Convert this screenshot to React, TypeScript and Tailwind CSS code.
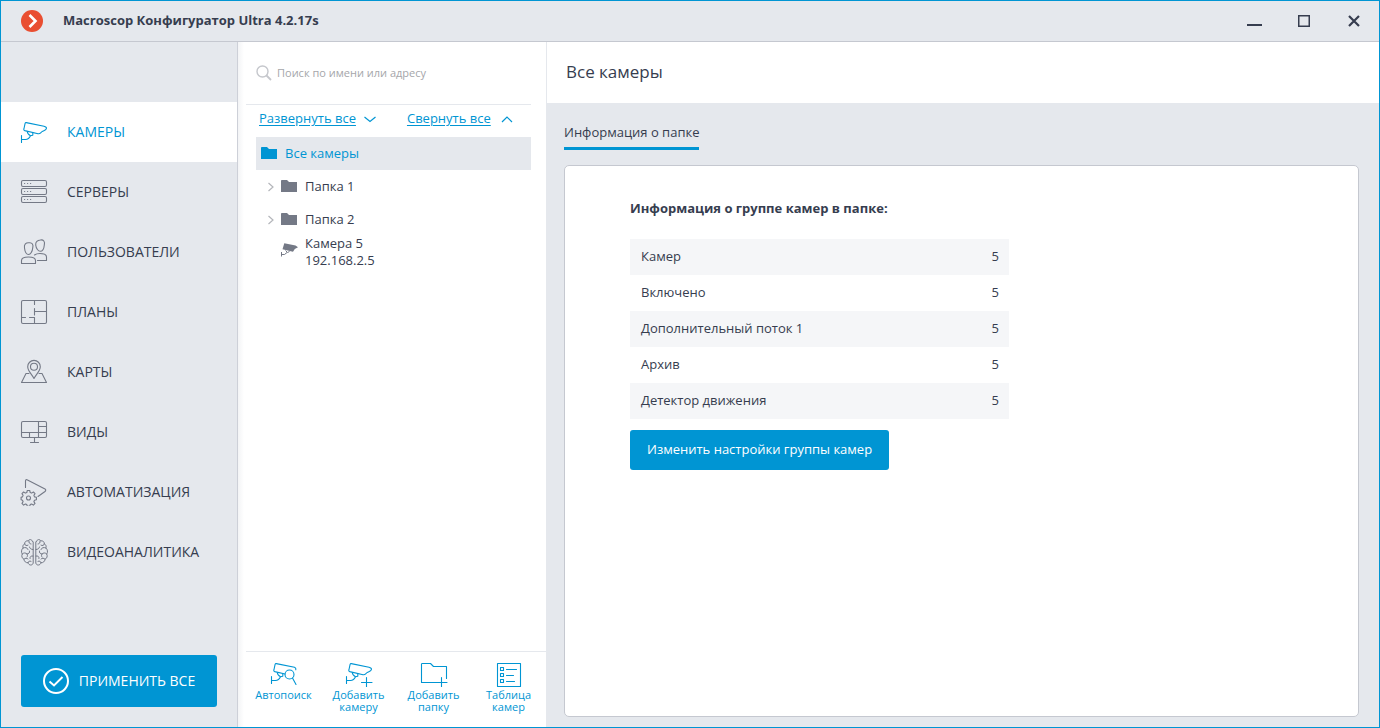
import type { ReactNode } from "react";

type IconProps = { children: ReactNode; size?: string };

function Icon({ children, size = "size-7" }: IconProps) {
  return (
    <svg
      aria-hidden="true"
      viewBox="0 0 28 28"
      className={`${size} shrink-0`}
      fill="none"
      stroke="currentColor"
      strokeWidth="1.1"
      strokeLinecap="round"
      strokeLinejoin="round"
    >
      {children}
    </svg>
  );
}

const cameraBody =
  "M6.3 4.6L24 8.2Q26.6 8.8 26.5 10.3C26.2 12.6 23.8 12.4 22 13.6C20.5 14.8 20 16.2 18 15.7L4.8 12.6Q3.5 12.2 3.9 11L5.1 5.3Q5.4 4.4 6.3 4.6Z";
const cameraArm = "M1.5 17.5V24.5M1.5 21.5H5.5C8 21.5 9.5 20 10.5 17.7M7.3 13.5C7.3 15.5 8 16.3 10.5 17.7L12.8 17.2V14.8";

const CameraIcon = () => (
  <Icon>
    <path d={cameraBody} />
    <path d={cameraArm} />
  </Icon>
);

const ServersIcon = () => (
  <Icon>
    {[2.5, 10.5, 18.5].map((y) => (
      <g key={y}>
        <rect x="1.5" y={y} width="25" height="6" rx="1.5" />
        <path d={`M4.5 ${y + 3}h.2M7.5 ${y + 3}h.2M10.5 ${y + 3}h.2`} />
      </g>
    ))}
  </Icon>
);

const UsersIcon = () => (
  <Icon>
    <path d="M1.5 25.5V22.5C1.5 20.5 4.5 19 8.5 19S15.5 20.5 15.5 22.5V25.5Z" />
    <path d="M4.5 10C3.8 6.5 6 4.5 9 4.8C12.3 4.2 13.6 7 12.7 10C12.4 13.5 10.6 16.5 8.6 16.5S4.9 13.5 4.5 10Z" />
    <path d="M15.7 7C15.4 4 17.5 2.2 20.3 2C23.5 1.3 25.2 3.8 24.3 7C24 10.5 22.3 13.3 20.3 13.3S16.1 10.5 15.7 7Z" />
    <path d="M14.5 17C16 15.8 18 15.5 20 15.5C24 15.5 26.5 17 26.5 19V22.5H17.5" />
  </Icon>
);

const PlansIcon = () => (
  <Icon>
    <rect x="1.5" y="2.5" width="25" height="23" rx="1.5" />
    <path d="M14.5 2.5V6.5M14.5 10.5V17M14.5 13.5H26.5M1.5 19.5H5.5M9.5 19.5H14.5V25.5" />
  </Icon>
);

const MapsIcon = () => (
  <Icon>
    <path d="M14 20.5C12 16.5 7.7 13 7.7 8.7A6.3 6.3 0 0 1 20.3 8.7C20.3 13 16 16.5 14 20.5Z" />
    <circle cx="14" cy="8.7" r="3.5" />
    <path d="M9 15.5H6L1.5 24.5H26.5L22 15.5H19" />
  </Icon>
);

const ViewsIcon = () => (
  <Icon>
    <rect x="1.5" y="3.5" width="25" height="16" rx="1.5" />
    <path d="M18.5 3.5V19.5M18.5 8.5H26.5M1.5 14.5H26.5M9.5 14.5V19.5M14.5 19.5V24.5M10.5 24.5H18.5" />
  </Icon>
);

const AutomationIcon = () => (
  <Icon>
    <path d="M5.5 9.5V3Q5.5 1 7.5 1.9L25 10.9Q26.5 12 25 13.5L18 18.5" />
    <path d="M7.3 12.5h2.4l.5 2 1.4.6 1.8-1.1 1.6 1.7-1.1 1.7.6 1.5 1.9.4v2.4l-1.9.5-.6 1.5 1.1 1.7-1.6 1.7-1.8-1.1-1.4.6-.5 1.7H7.3l-.5-1.7-1.4-.6-1.8 1.1L2 25.4l1.1-1.7-.6-1.5-1.4-.5v-2.4l1.4-.4.6-1.5L2 15.7 3.6 14l1.8 1.1 1.4-.6Z" />
    <circle cx="8.5" cy="20" r="2" />
  </Icon>
);

const BrainHalf = () => (
  <path d="M12.5 3.5C12 1 9 1 8.3 2.8C6 2.5 4.5 4 4.7 6C3 6.5 2.4 8.5 3.2 10C1.3 11.2 1 14.5 2.3 16C1.2 18 2 20.5 4 21.2C4.2 23.5 6 25 8 24.7C8.7 27.5 12.5 28 13.2 25V4M9 3C8.5 4.5 9.5 6 11 6M4.7 6C5 7.5 6.5 8 8 7.2M3.2 10C5 9 7.5 9.5 8 11.5M13 11.5C11 11.5 9.8 10.5 9.5 9M2.3 16C3.5 14.5 6 14.5 7 16M7 16C9 16 10 14.5 9.5 13M7 16C7.8 17 7.7 18.2 7 19M4 21.2C5 19.7 7 20 8 21M13 18C11 17.5 9.5 19 10 20.5M8 24.7C8 23.5 9.5 22.5 11 23.3" />
);

const BrainIcon = () => (
  <Icon>
    <g strokeWidth="1">
      <BrainHalf />
      <g transform="translate(29 0) scale(-1 1)">
        <BrainHalf />
      </g>
    </g>
  </Icon>
);

const SearchCameraIcon = () => (
  <Icon>
    <path d="M15 15L4.8 12.6Q3.5 12.2 3.9 11L5.1 5.3Q5.4 4.4 6.3 4.6L24.5 8.3Q26.3 9 25.8 10.8" />
    <path d={cameraArm} />
    <circle cx="19.5" cy="15.5" r="4.5" />
    <path d="M22.5 19L26 25.5" />
  </Icon>
);

const AddCameraIcon = () => (
  <Icon>
    <path d={cameraBody} />
    <path d={cameraArm} />
    <path d="M21.5 18.5V28M16.5 23.5H27" />
  </Icon>
);

const AddFolderIcon = () => (
  <Icon>
    <path d="M17.5 23.5H1.5V5Q1.5 4.5 2.5 4.5H10.5L13.5 7.5H26.5V19.5" />
    <path d="M21.5 18.5V28M17.5 23.5H27" />
  </Icon>
);

const CameraTableIcon = () => (
  <Icon>
    <rect x="2.5" y="4.5" width="23" height="23" />
    <path d="M5.5 8.5h3v3h-3zM5.5 14.5h3v3h-3zM5.5 20.5h3v3h-3zM11.5 10.5H21.5M11.5 16.5H18.5M11.5 22.5H19.5" />
  </Icon>
);

const FolderIcon = () => (
  <svg aria-hidden="true" viewBox="0 0 16 13" className="h-[13px] w-4 shrink-0" fill="currentColor">
    <path d="M0 .5Q0 0 1 0H6L8 2H16V12H0Z" />
  </svg>
);

const SmallCameraIcon = () => (
  <svg aria-hidden="true" viewBox="0 0 17 14" className="h-[14px] w-[17px] shrink-0">
    <path d="M3.3.3L14.5 2.6L17 4.2L13.8 6L12 8.7L1.5 6.2Z" fill="currentColor" />
    <path d="M.5 9V13.5M.5 11.5H3.5L6 9.5M4.5 7.5L6.5 9.5L8.5 8.5" fill="none" stroke="currentColor" />
  </svg>
);

function Chevron({ d, className = "" }: { d: string; className?: string }) {
  return (
    <svg
      aria-hidden="true"
      viewBox="0 0 12 12"
      className={`size-3 shrink-0 ${className}`}
      fill="none"
      stroke="currentColor"
      strokeWidth="1.2"
    >
      <path d={d} />
    </svg>
  );
}

const sections = [
  { title: "КАМЕРЫ", icon: <CameraIcon />, active: true },
  { title: "СЕРВЕРЫ", icon: <ServersIcon /> },
  { title: "ПОЛЬЗОВАТЕЛИ", icon: <UsersIcon /> },
  { title: "ПЛАНЫ", icon: <PlansIcon /> },
  { title: "КАРТЫ", icon: <MapsIcon /> },
  { title: "ВИДЫ", icon: <ViewsIcon /> },
  { title: "АВТОМАТИЗАЦИЯ", icon: <AutomationIcon /> },
  { title: "ВИДЕОАНАЛИТИКА", icon: <BrainIcon /> },
];

const tools = [
  { title: "Автопоиск", icon: <SearchCameraIcon /> },
  { title: "Добавить камеру", icon: <AddCameraIcon /> },
  { title: "Добавить папку", icon: <AddFolderIcon /> },
  { title: "Таблица камер", icon: <CameraTableIcon /> },
];

const stats: [string, number][] = [
  ["Камер", 5],
  ["Включено", 5],
  ["Дополнительный поток 1", 5],
  ["Архив", 5],
  ["Детектор движения", 5],
];

function TitleBar() {
  return (
    <header className="flex h-[41px] shrink-0 items-center border-b border-[#c5c8d0] pr-[15px] pl-5">
      <svg aria-hidden="true" viewBox="0 0 22 22" className="size-[22px]">
        <circle cx="11" cy="11" r="11" fill="#e94e31" />
        <path d="M8.5 5L14.5 11L8.5 17" fill="none" stroke="#fff" strokeWidth="2.6" />
      </svg>
      <h1 className="ml-5 flex-1 text-[13px] font-bold">Macroscop Конфигуратор Ultra 4.2.17s</h1>
      <div className="flex items-center gap-[30px]">
        <button type="button" aria-label="Свернуть окно" className="size-5">
          <svg viewBox="0 0 20 20" className="size-5">
            <path d="M3 14H18" stroke="#363d4f" strokeWidth="2" />
          </svg>
        </button>
        <button type="button" aria-label="Развернуть окно" className="size-5">
          <svg viewBox="0 0 20 20" className="size-5">
            <rect x="4.75" y="4.75" width="10.5" height="10.5" fill="none" stroke="#363d4f" strokeWidth="1.5" />
          </svg>
        </button>
        <button type="button" aria-label="Закрыть" className="size-5">
          <svg viewBox="0 0 20 20" className="size-5">
            <path d="M5 5L15 15M15 5L5 15" stroke="#363d4f" strokeWidth="2.2" />
          </svg>
        </button>
      </div>
    </header>
  );
}

function Sidebar() {
  return (
    <aside className="flex w-[237px] shrink-0 flex-col border-r border-[#cdd0d8]">
      <nav className="flex-1 pt-[60px]">
        {sections.map((s) => (
          <a
            key={s.title}
            href="#"
            className={`flex h-[60px] items-center gap-[19px] pl-[19px] text-[14px] ${s.active ? "bg-white text-[#0095d3]" : ""}`}
          >
            <span className={s.active ? "" : "text-[#747986]"}>{s.icon}</span>
            <span className="pb-[2px]">{s.title}</span>
          </a>
        ))}
      </nav>
      <button
        type="button"
        className="mx-5 mb-5 flex h-[52px] items-center justify-center gap-[10px] rounded-[3px] bg-[#0095d3] text-[14px] text-white"
      >
        <svg aria-hidden="true" viewBox="0 0 26 26" className="size-[26px]" fill="none" stroke="currentColor" strokeWidth="2">
          <circle cx="13" cy="13" r="12" />
          <path d="M6.5 13.5L11 17.5L19.5 9" />
        </svg>
        <span className="pb-[2px]">ПРИМЕНИТЬ ВСЕ</span>
      </button>
    </aside>
  );
}

function CameraTree() {
  return (
    <section className="flex w-[309px] shrink-0 flex-col border-r border-[#e5e8ed] bg-white bg-linear-to-r from-[#f3f4f6] to-white to-[6px] pl-2">
      <div className="mr-[15px] border-b border-[#e5e8ed]">
        <label className="flex h-[62px] items-center gap-[5px] pl-[10px]">
          <svg aria-hidden="true" viewBox="0 0 16 16" className="size-4" fill="none" stroke="#c5c7cc">
            <circle cx="6.5" cy="6.5" r="5.5" strokeWidth="1.4" />
            <path d="M10.5 10.5L15 15" strokeWidth="1.8" />
          </svg>
          <input
            type="search"
            aria-label="Поиск"
            placeholder="Поиск по имени или адресу"
            className="min-w-0 flex-1 text-[11px] outline-none placeholder:text-[#a5a6aa]"
          />
        </label>
      </div>
      <div className="mr-[15px] flex h-8 items-center pb-1 pl-[13px] text-[13px] text-[#0095d3]">
        <button type="button" className="flex items-center gap-2 underline underline-offset-2">
          Развернуть все
          <Chevron d="M.5 4L6 8.5L11.5 4" />
        </button>
        <button type="button" className="ml-[31px] flex items-center gap-[10px] underline underline-offset-2">
          Свернуть все
          <Chevron d="M1 9L6 4L11 9" />
        </button>
      </div>
      <ul className="mr-[15px] ml-[10px] flex-1 text-[13px]">
        <li className="flex h-[33px] items-center gap-2 bg-[#e5e8ed] pl-[5px] text-[#0095d3]">
          <FolderIcon />
          Все камеры
        </li>
        {["Папка 1", "Папка 2"].map((name) => (
          <li key={name} className="flex h-[33px] items-center gap-2 pl-[9px]">
            <Chevron d="M3.5 2L8 6L3.5 10" className="-mr-1 text-[#b4b6bb]" />
            <span className="text-[#747986]">
              <FolderIcon />
            </span>
            {name}
          </li>
        ))}
        <li className="-mt-px flex items-center gap-[7px] pl-[25px] leading-[17px]">
          <span className="mb-1 text-[#747986]">
            <SmallCameraIcon />
          </span>
          <span>
            Камера 5<br />
            192.168.2.5
          </span>
        </li>
      </ul>
      <div className="grid h-[76px] grid-cols-4 border-t border-[#e5e8ed] text-[11px] leading-3 text-[#0095d3]">
        {tools.map((t) => (
          <button key={t.title} type="button" className="flex flex-col items-center gap-[2px] px-2 pt-[7px]">
            {t.icon}
            <span>{t.title}</span>
          </button>
        ))}
      </div>
    </section>
  );
}

function FolderDetails() {
  return (
    <main className="flex min-w-0 flex-1 flex-col">
      <h2 className="flex h-[61px] shrink-0 items-center bg-white pb-[2px] pl-[19px] text-[17px]">Все камеры</h2>
      <div className="flex flex-1 flex-col pt-[19px] pr-5 pb-[10px] pl-[17px]">
        <div role="tablist" className="mb-[15px] flex">
          <button type="button" role="tab" aria-selected="true" className="h-7 border-b-3 border-[#0095d3] pb-[3px] text-[13px]">
            Информация о папке
          </button>
        </div>
        <div className="flex-1 rounded-[5px] border border-[#c5c8d0] bg-white px-[65px] pt-8">
          <h3 className="mb-5 text-[13px] leading-[21px] font-bold">Информация о группе камер в папке:</h3>
          <table className="w-full max-w-[379px] text-[13px]">
            <tbody>
              {stats.map(([label, value]) => (
                <tr key={label} className="h-9 odd:bg-[#f5f6f8]">
                  <th scope="row" className="pl-[11px] text-left font-normal">
                    {label}
                  </th>
                  <td className="pr-[10px] text-right">{value}</td>
                </tr>
              ))}
            </tbody>
          </table>
          <button type="button" className="mt-[11px] h-10 rounded-[3px] bg-[#0095d3] px-[17px] text-[13px] text-white">
            Изменить настройки группы камер
          </button>
        </div>
      </div>
    </main>
  );
}

export default function App() {
  return (
    <div className="flex min-h-screen flex-col border border-[#0095d3] bg-[#e5e8ed] font-['Open_Sans','Noto_Sans',sans-serif] text-[#363d4f]">
      <TitleBar />
      <div className="flex flex-1">
        <Sidebar />
        <CameraTree />
        <FolderDetails />
      </div>
    </div>
  );
}
